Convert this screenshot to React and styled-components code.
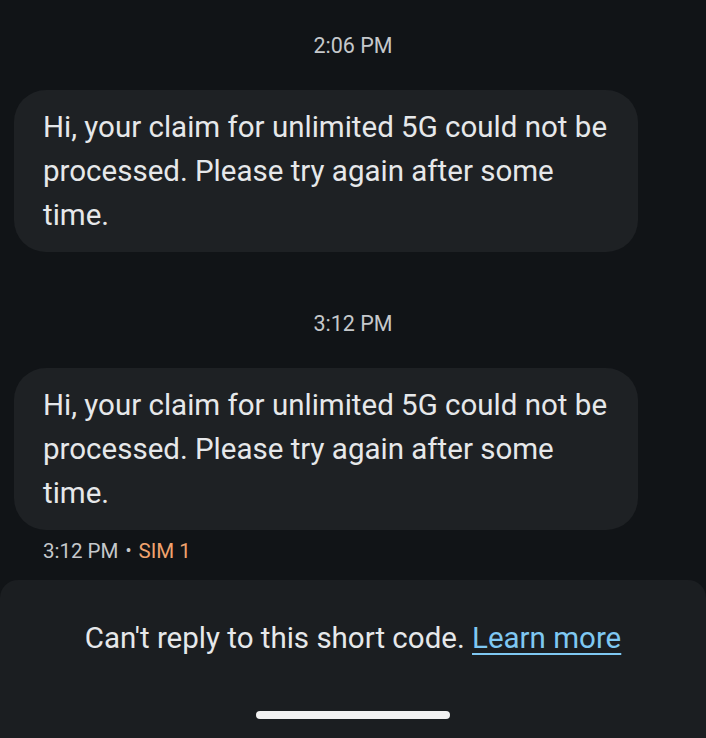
import styled, { createGlobalStyle } from "styled-components";

const GlobalStyle = createGlobalStyle`
    html, body {
        margin: 0;
        padding: 0;
        background: #111417;
    }
    body {
        font-family: Roboto, "Noto Sans", sans-serif;
    }
`;

const messages = [
    {
        time: "2:06 PM",
        text: "Hi, your claim for unlimited 5G could not be processed. Please try again after some time.",
    },
    {
        time: "3:12 PM",
        text: "Hi, your claim for unlimited 5G could not be processed. Please try again after some time.",
        footer: true,
    },
];

const App = () => {
    return (
        <Screen>
            <GlobalStyle />
            <Thread>
                {messages.map((m, i) => (
                    <Group key={i} $first={i === 0}>
                        <Stamp>{m.time}</Stamp>
                        <Bubble>{m.text}</Bubble>
                        {m.footer && (
                            <Meta>
                                {m.time}
                                <Dot>•</Dot>
                                <Sim>SIM 1</Sim>
                            </Meta>
                        )}
                    </Group>
                ))}
            </Thread>
            <BottomPanel>
                <Notice>
                    Can't reply to this short code. <LearnMore>Learn more</LearnMore>
                </Notice>
                <HomeBar />
            </BottomPanel>
        </Screen>
    );
};

export default App;

const Screen = styled.div`
    width: 706px;
    height: 738px;
    display: flex;
    flex-direction: column;
    background: #111417;
    overflow: hidden;
`;
const Thread = styled.div`
    flex: 1;
    display: flex;
    flex-direction: column;
    padding: 0 14px;
`;
const Group = styled.div`
    display: flex;
    flex-direction: column;
    margin-top: ${(props) => (props.$first ? "34px" : "60px")};
`;
const Stamp = styled.div`
    text-align: center;
    color: #c5c8cb;
    font-size: 21.5px;
    line-height: 24px;
    margin-bottom: 32px;
`;
const Bubble = styled.div`
    width: 624px;
    box-sizing: border-box;
    background: #1e2124;
    border-radius: 32px;
    padding: 15px 18px 15px 29px;
    color: #e6e8ea;
    font-size: 29.5px;
    line-height: 44px;
`;
const Meta = styled.div`
    display: flex;
    align-items: center;
    color: #c5c8cb;
    font-size: 20.5px;
    line-height: 24px;
    padding: 9px 0 0 29px;
`;
const Dot = styled.span`
    font-size: 18px;
    margin: 0 7px;
`;
const Sim = styled.span`
    color: #f0a36e;
`;
const BottomPanel = styled.div`
    height: 158px;
    background: #1b1e21;
    border-radius: 18px 18px 0 0;
    display: flex;
    flex-direction: column;
    align-items: center;
`;
const Notice = styled.div`
    margin-top: 40px;
    color: #e6e8ea;
    font-size: 29.5px;
    line-height: 36px;
`;
const LearnMore = styled.a`
    color: #7fc8f2;
    text-decoration: underline;
    text-underline-offset: 5px;
    text-decoration-thickness: 2px;
`;
const HomeBar = styled.div`
    margin-top: 55px;
    width: 194px;
    height: 8px;
    border-radius: 4px;
    background: #f2f2f2;
`;
